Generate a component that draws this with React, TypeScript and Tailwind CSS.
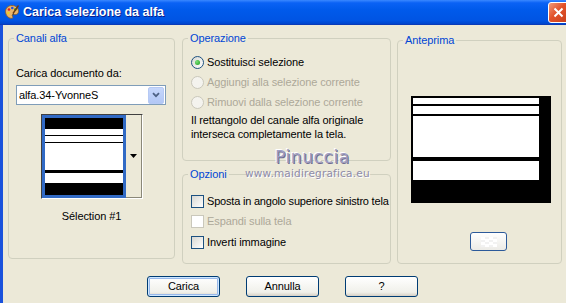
import clsx from 'clsx';

function Radio({ checked, disabled }: { checked?: boolean; disabled?: boolean }) {
  return (
    <span
      className={clsx(
        'w-[13px] h-[13px] rounded-full border flex items-center justify-center shrink-0',
        disabled
          ? 'border-[#CAC8BB] bg-[#F4F3EE]'
          : 'border-[#1C5180] bg-[linear-gradient(135deg,#D8D8D2,#FFFFFF)]'
      )}
    >
      {checked && <span className="w-[5px] h-[5px] rounded-full bg-[radial-gradient(circle_at_35%_35%,#7BE17B,#1A9A1A)]" />}
    </span>
  );
}

function Check({ disabled }: { disabled?: boolean }) {
  return (
    <span
      className={clsx(
        'w-[13px] h-[13px] border shrink-0',
        disabled ? 'border-[#CAC8BB] bg-white' : 'border-[#1C5180] bg-[linear-gradient(135deg,#D8D8D2,#FFFFFF)]'
      )}
    />
  );
}

function Button({ label, primary }: { label: string; primary?: boolean }) {
  return (
    <button
      className={clsx(
        'w-[73px] h-[21px] rounded-[3px] border border-[#003C74] bg-[linear-gradient(180deg,#FFFFFF,#F0F0EA_80%,#D6D0C5)] text-black flex items-center justify-center',
        primary && 'shadow-[inset_0_0_0_1px_#CEE7FF,inset_0_0_0_2px_#98B8EA]'
      )}
    >
      {label}
    </button>
  );
}

// XP group box: the legend sits 8px in from the left border
function Group({ title, className, children }: { title: string; className?: string; children?: React.ReactNode }) {
  return (
    <fieldset className={clsx('min-w-0 border border-[#D0D0BF] rounded-[4px]', className)}>
      <legend className="ml-[5px] px-[2px] leading-[13px] text-[#0046D5]">{title}</legend>
      {children}
    </fieldset>
  );
}

function PaletteIcon() {
  return (
    <svg width="16" height="16" viewBox="0 0 16 16">
      <path d="M8 1.5C4 1.5 1.5 4.2 1.5 7.5c0 3.4 2.6 6.8 6 6.8 1.4 0 1.6-1 1-1.8-.6-.9-.2-1.9 1-1.9h1.8c2 0 3.2-1.3 3.2-3.3C14.5 4 11.7 1.5 8 1.5z" fill="#E9B56A" stroke="#8A5A22" strokeWidth="0.8" />
      <circle cx="5" cy="5.5" r="1.3" fill="#E02020" />
      <circle cx="8.3" cy="4" r="1.3" fill="#2050E0" />
      <circle cx="11.3" cy="5.5" r="1.3" fill="#20A030" />
      <circle cx="4.3" cy="9" r="1.3" fill="#F0D020" />
      <path d="M14.5 1.5 9 9.5" stroke="#6B3A12" strokeWidth="1.4" />
      <path d="M9.2 9 8 11.5 10 10.2z" fill="#333" />
    </svg>
  );
}

export default function App() {
  return (
    <div className="relative w-[566px] h-[303px] overflow-hidden bg-[#ECE9D8] flex flex-col font-['Liberation_Sans',Arial,sans-serif] text-[11px] tracking-[-0.1px] text-black">
      {/* title bar */}
      <div className="h-[25px] shrink-0 flex items-center justify-between pl-[4px] bg-[linear-gradient(180deg,#3A88FF_0%,#0A62F5_12%,#005AEB_40%,#0054E3_85%,#0045CC_100%)] border-b border-[#0A3BB8]">
        <div className="flex items-center gap-[3px]">
          <PaletteIcon />
          <span className="text-white font-bold text-[12.5px] tracking-normal [text-shadow:1px_1px_#0A1E8C]">Carica selezione da alfa</span>
        </div>
        <div className="w-[21px] h-[21px] mr-[-3px] rounded-[3px] border border-white bg-[linear-gradient(135deg,#F19B7A,#E2522A_45%,#C8401C)] flex items-center justify-center">
          <svg width="11" height="11" viewBox="0 0 11 11">
            <path d="M1.5 1.5 9.5 9.5M9.5 1.5 1.5 9.5" stroke="white" strokeWidth="2" />
          </svg>
        </div>
      </div>

      {/* body */}
      <div className="flex-1 flex flex-col border-l-[3px] border-[#1A52DC] pl-[5px] pt-[7px]">
        <div className="h-[232px] flex items-start">
          {/* Canali alfa */}
          <Group title="Canali alfa" className="w-[167px] h-[227px] shrink-0">
            <div className="px-[7px]">
              <div className="mt-[22px] leading-[13px]">Carica documento da:</div>
              <div className="mt-[5px] w-[150px] h-[20px] border border-[#7F9DB9] bg-white flex items-center justify-between">
                <span className="pl-[2px]">alfa.34-YvonneS</span>
                <span className="w-[16px] h-[17px] mr-[1px] rounded-[2px] bg-[linear-gradient(180deg,#C6D7FC,#B2C7F5)] border border-[#B6C9F4] flex items-center justify-center">
                  <svg width="8" height="6" viewBox="0 0 8 6">
                    <path d="M1 1.2 4 4.2 7 1.2" stroke="#4D6185" strokeWidth="1.8" fill="none" />
                  </svg>
                </span>
              </div>
              <div className="mt-[9px] mx-auto w-[102px] h-[85px] flex border-t border-l border-[#404040] border-b border-r border-b-white border-r-white">
                <div className="w-[84px] border-[3px] border-[#316AC5] bg-white flex flex-col">
                  <div className="h-[11px] bg-black" />
                  <div className="h-[6px]" />
                  <div className="h-[1px] bg-black" />
                  <div className="h-[6px]" />
                  <div className="h-[1px] bg-black" />
                  <div className="h-[27px]" />
                  <div className="h-[3px] bg-black" />
                  <div className="h-[10px]" />
                  <div className="flex-1 bg-black" />
                </div>
                <div className="flex-1 border-r border-b border-[#8A8878] flex items-center justify-center">
                  <svg width="7" height="4" viewBox="0 0 7 4">
                    <path d="M0 0h7L3.5 4z" fill="black" />
                  </svg>
                </div>
              </div>
              <div className="mt-[11px] text-center leading-[13px]">Sélection #1</div>
            </div>
          </Group>

          <div className="ml-[7px] w-[209px] shrink-0 flex flex-col">
            {/* Operazione */}
            <Group title="Operazione" className="h-[129px]">
              <div className="px-[8px]">
                <div className="mt-[7px] flex flex-col">
                  <div className="h-[20px] flex items-center gap-[3px]">
                    <Radio checked />
                    <span>Sostituisci selezione</span>
                  </div>
                  <div className="h-[20px] flex items-center gap-[3px] text-[#ACA899]">
                    <Radio disabled />
                    <span>Aggiungi alla selezione corrente</span>
                  </div>
                  <div className="h-[20px] flex items-center gap-[3px] text-[#ACA899]">
                    <Radio disabled />
                    <span>Rimuovi dalla selezione corrente</span>
                  </div>
                </div>
                <p className="mt-[1px] leading-[14px]">
                  Il rettangolo del canale alfa originale
                  <br />
                  interseca completamente la tela.
                </p>
              </div>
            </Group>

            {/* Opzioni */}
            <Group title="Opzioni" className="mt-[7px] h-[96px]">
              <div className="px-[8px] mt-[10px] flex flex-col whitespace-nowrap">
                <div className="h-[20px] flex items-center gap-[3px]">
                  <Check />
                  <span className="tracking-[-0.2px]">Sposta in angolo superiore sinistro tela</span>
                </div>
                <div className="h-[21px] flex items-center gap-[3px] text-[#ACA899]">
                  <Check disabled />
                  <span>Espandi sulla tela</span>
                </div>
                <div className="h-[20px] flex items-center gap-[3px]">
                  <Check />
                  <span>Inverti immagine</span>
                </div>
              </div>
            </Group>
          </div>

          {/* Anteprima */}
          <Group title="Anteprima" className="ml-[6px] mt-[2px] w-[165px] h-[230px] shrink-0">
            <div className="ml-[13px] mt-[49px] w-[140px] h-[107px] bg-black pl-[2px] pr-[12px] pt-[2px] flex flex-col">
              <div className="h-[6px] bg-white" />
              <div className="mt-[2px] h-[8px] bg-white" />
              <div className="mt-[2px] h-[41px] bg-white" />
              <div className="mt-[4px] h-[19px] bg-white" />
            </div>
            <div className="ml-[72px] mt-[29px] w-[37px] h-[19px] rounded-[3px] border border-[#2C5A9A] bg-[linear-gradient(180deg,#FFFFFF,#ECEBE6)] flex items-center justify-center">
              <div className="w-[16px] h-[10px] bg-[conic-gradient(#F2F2F2_25%,#FFFFFF_0_50%,#F2F2F2_0_75%,#FFFFFF_0)] bg-[length:8px_5px]" />
            </div>
          </Group>
        </div>

        {/* buttons */}
        <div className="mt-[12px] flex justify-center gap-[26px] pr-[9px]">
          <Button label="Carica" primary />
          <Button label="Annulla" />
          <Button label="?" />
        </div>
      </div>

      {/* watermark */}
      <div className="absolute left-[275px] top-[145px] text-[17px] tracking-[0.6px] text-[#A09EC2] font-['DejaVu_Sans',sans-serif] [text-shadow:1px_1px_#6E6C90,-1px_-1px_#FFFFFF]">
        Pinuccia
      </div>
      <div className="absolute left-[245px] top-[166px] text-[10.5px] tracking-[0.2px] text-[#8E8CA8] font-['DejaVu_Sans',sans-serif] [text-shadow:1px_1px_#FFFFFF]">
        www.maidiregrafica.eu
      </div>
    </div>
  );
}
